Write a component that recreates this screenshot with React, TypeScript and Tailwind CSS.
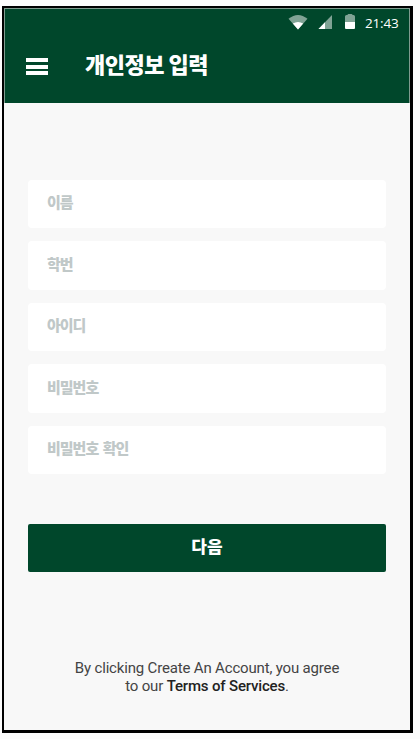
const fields = ["이름", "학번", "아이디", "비밀번호", "비밀번호 확인"];

function StatusBar() {
  return (
    <div className="flex h-[26px] shrink-0 pl-[283px]">
      <svg className="mt-[5px] h-4 w-[20px] shrink-0" viewBox="0 0 20 16">
        <path d="M.5 4.8Q10-3 19.5 4.8L10 15.5Z" fill="#80a395" />
        <path d="M4.8 9.6Q10 6.6 15.2 9.6L10 15.5Z" fill="#fff" />
      </svg>
      <svg className="mt-[5px] ml-[10px] h-[15px] w-[15px] shrink-0" viewBox="0 0 15 15">
        <path d="M.5 15L14 1V15Z" fill="#80a395" />
        <path d="M.5 15L7 8.3V15Z" fill="#fff" />
      </svg>
      <svg className="mt-[5px] ml-[12px] h-[15px] w-[10px] shrink-0" viewBox="0 0 10 15">
        <path d="M0 8V2.5Q0 1 1.5 1H2.5Q2.5 0 3.5 0H6.5Q7.5 0 7.5 1H8.5Q10 1 10 2.5V8Z" fill="#80a395" />
        <path d="M0 8H10V14Q10 15 9 15H1Q0 15 0 14Z" fill="#fff" />
      </svg>
      <span className="mt-[5px] ml-[10px] font-['Open_Sans','Noto_Sans',sans-serif] text-[13.5px] leading-[18px] tracking-[-0.2px] text-white">21:43</span>
    </div>
  );
}

export default function App() {
  return (
    <div className="h-[739px] w-[420px] bg-[#fcfcfc] pt-[6px] pl-[2px] font-['Noto_Sans_CJK_KR',sans-serif]">
      <main className="flex h-[727px] w-[411px] flex-col border-2 border-r-[3px] border-b-[3px] border-black bg-[#f8f8f8]">
        <header className="h-[95px] shrink-0 border border-b-0 border-[#7f9b8f] bg-[#00472b]">
          <StatusBar />
          <div className="flex items-start">
            <div className="mt-[23px] ml-[21px] flex w-[22px] flex-col">
              <span className="h-[4px] bg-white" />
              <span className="mt-[3px] h-[4px] bg-white" />
              <span className="mt-[2px] h-[4px] bg-white" />
            </div>
            <h1 className="mt-[12px] ml-[37px] text-[22px] leading-[32px] font-black tracking-[-0.5px] whitespace-nowrap text-white">개인정보 입력</h1>
          </div>
        </header>
        <form className="mt-[77px] ml-[24px] flex w-[358px] flex-col">
          <div className="flex flex-col gap-[13.2px]">
            {fields.map((label) => (
              <input
                key={label}
                aria-label={label}
                placeholder={label}
                className="h-[48.3px] w-full rounded-[4px] bg-white pb-[5px] pl-[19px] text-[15px] font-black tracking-[-1px] [word-spacing:2px] outline-none placeholder:text-[#c0c8c8] placeholder:opacity-100"
              />
            ))}
          </div>
          <button type="button" className="mt-[50px] h-[48px] rounded-[2px] bg-[#00472b] pb-[5px] text-[17px] font-black text-white">다음</button>
        </form>
        <p className="mt-[87px] text-center font-[Roboto,sans-serif] text-[15px] leading-[18px] tracking-[-0.17px] text-[#444]">
          By clicking Create An Account, you agree<br />to our <span className="font-medium text-[#222]">Terms of Services</span>.
        </p>
      </main>
    </div>
  );
}
